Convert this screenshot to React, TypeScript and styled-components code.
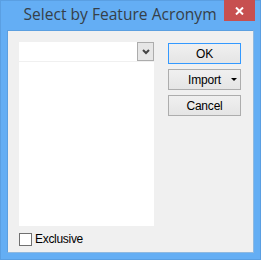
import React from "react";
import styled, { createGlobalStyle } from "styled-components";

const Global = createGlobalStyle`
  html, body { margin: 0; padding: 0; background: #ffffff; }
  * { box-sizing: border-box; }
`;

const Window = styled.div`
  width: 261px;
  height: 260px;
  background: #64aef4;
  border: 1px solid #5a9fe2;
  padding: 0 6px 6px 6px;
  display: flex;
  flex-direction: column;
`;

const TitleBar = styled.div`
  height: 29px;
  display: flex;
  align-items: flex-start;
  position: relative;
`;

const Title = styled.div`
  flex: 1;
  text-align: center;
  font-family: "Open Sans", "Noto Sans", sans-serif;
  font-size: 15.6px;
  color: #363f48;
  padding-top: 3px;
  padding-right: 21px;
  line-height: 21px;
`;

const CloseButton = styled.div`
  position: absolute;
  top: -1px;
  right: -1px;
  width: 31px;
  height: 21px;
  background: #c75050;
  display: flex;
  align-items: center;
  justify-content: center;
`;

const Client = styled.div`
  flex: 1;
  background: #f0f0f0;
  border: 1px solid #5b9fe0;
  border-right-color: #8fb9e0;
  border-bottom-color: #8fb9e0;
  padding: 11px 0 0 11px;
  display: flex;
  flex-direction: column;
`;

const Row = styled.div`
  display: flex;
  gap: 14px;
`;

const ListBox = styled.div`
  width: 135px;
  height: 184px;
  background: #ffffff;
  display: flex;
  flex-direction: column;
`;

const Combo = styled.div`
  height: 20px;
  border-bottom: 1px solid #f0f0f0;
  display: flex;
  justify-content: flex-end;
  align-items: flex-start;
`;

const ComboButton = styled.div`
  width: 17px;
  height: 19px;
  border: 1px solid #acacac;
  background: #e6e6e6;
  display: flex;
  align-items: center;
  justify-content: center;
`;

const Buttons = styled.div`
  display: flex;
  flex-direction: column;
  gap: 5px;
  padding-top: 1px;
`;

const Button = styled.div<{ $default?: boolean }>`
  width: 73px;
  height: 21px;
  border: 1px solid ${(p) => (p.$default ? "#3399ff" : "#adadad")};
  background: linear-gradient(#f0f0f0, #e5e5e5);
  font-family: "Liberation Sans", Arial, sans-serif;
  font-size: 12px;
  letter-spacing: -0.2px;
  color: #000;
  display: flex;
  align-items: center;
  justify-content: center;
  position: relative;
  line-height: 1;
`;

const Caret = styled.span`
  position: absolute;
  right: 3px;
  top: 8px;
  width: 0;
  height: 0;
  border-left: 3px solid transparent;
  border-right: 3px solid transparent;
  border-top: 3px solid #000;
`;

const CheckRow = styled.label`
  margin-top: 6px;
  display: flex;
  align-items: center;
  gap: 3px;
  font-family: "Liberation Sans", Arial, sans-serif;
  font-size: 12px;
  letter-spacing: -0.3px;
  color: #000;
`;

const CheckBox = styled.span`
  width: 13px;
  height: 13px;
  border: 1px solid #707070;
  background: #ffffff;
  display: inline-block;
`;

export default function App() {
  return (
    <>
      <Global />
      <Window>
        <TitleBar>
          <Title>Select by Feature Acronym</Title>
          <CloseButton>
            <svg width="9" height="8" viewBox="0 0 9 8">
              <path d="M1 0.5 L8 7.5 M8 0.5 L1 7.5" stroke="#fff" strokeWidth="2" />
            </svg>
          </CloseButton>
        </TitleBar>
        <Client>
          <Row>
            <ListBox>
              <Combo>
                <ComboButton>
                  <svg width="8" height="6" viewBox="0 0 8 6">
                    <path d="M1 1 L4 4 L7 1" stroke="#444" strokeWidth="2" fill="none" />
                  </svg>
                </ComboButton>
              </Combo>
            </ListBox>
            <Buttons>
              <Button $default>OK</Button>
              <Button>
                Import
                <Caret />
              </Button>
              <Button>Cancel</Button>
            </Buttons>
          </Row>
          <CheckRow>
            <CheckBox />
            Exclusive
          </CheckRow>
        </Client>
      </Window>
    </>
  );
}
